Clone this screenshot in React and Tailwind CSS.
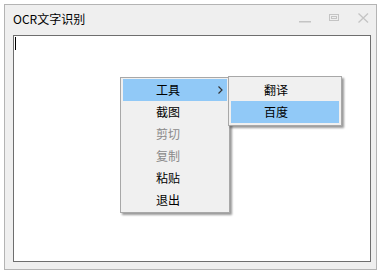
import React from "react";

const font = { fontFamily: '"Noto Sans CJK SC", "Liberation Sans", sans-serif' };

function MenuRow({ label, active, disabled, arrow }) {
  return (
    <div
      className={`relative flex h-[22px] items-center pl-[33px] pb-[1px] text-[12px] leading-none ${
        active ? "bg-[#91c9f7]" : ""
      } ${disabled ? "text-[#8a8a8a]" : "text-black"}`}
    >
      <span>{label}</span>
      {arrow && (
        <svg className="absolute left-[95px] top-[7px]" width="5" height="8" viewBox="0 0 5 8">
          <path d="M0.5 0.5 L4 4 L0.5 7.5" fill="none" stroke="#333" strokeWidth="1.2" />
        </svg>
      )}
    </div>
  );
}

export default function App() {
  return (
    <div className="relative h-[274px] w-[381px] bg-white pl-[4px] pt-[4px]" style={font}>
      <div className="flex h-[266px] w-[373px] flex-col border border-[#b4b4b4] bg-[#efefef]">
        <div className="flex h-[30px] items-start justify-between pl-[8px] pr-[7px] pt-[7px]">
          <span className="text-[12px] leading-[14px] text-black">OCR文字识别</span>
          <div className="flex items-start gap-[18px] pt-[1px]">
            <svg width="12" height="10" viewBox="0 0 12 10">
              <rect x="0" y="8" width="12" height="1.5" fill="#c4c4c4" />
            </svg>
            <svg width="11" height="10" viewBox="0 0 11 10">
              <rect x="0.5" y="1.5" width="9" height="6" fill="none" stroke="#c4c4c4" />
              <rect x="2.5" y="3.5" width="5" height="2" fill="none" stroke="#c4c4c4" />
            </svg>
            <svg width="11" height="10" viewBox="0 0 11 10">
              <path d="M0.5 0.5 L10 9.5 M10 0.5 L0.5 9.5" stroke="#c4c4c4" strokeWidth="1.3" />
            </svg>
          </div>
        </div>
        <div className="ml-[8px] mr-[5px] h-[227px] border border-[#6e6e6e] bg-white pl-[1px] pt-[1px]">
          <div className="h-[13px] w-[1px] bg-black" />
        </div>
      </div>

      <div className="absolute left-[120px] top-[77px] w-[110px] border border-[#a8a8a8] bg-[#f0f0f0] px-[2px] py-[1px] shadow-[2px_2px_2px_rgba(0,0,0,0.4)]">
        <MenuRow label="工具" active arrow />
        <MenuRow label="截图" />
        <MenuRow label="剪切" disabled />
        <MenuRow label="复制" disabled />
        <MenuRow label="粘贴" />
        <MenuRow label="退出" />
      </div>

      <div className="absolute left-[228px] top-[76px] w-[114px] border border-[#a8a8a8] bg-[#f0f0f0] p-[2px] shadow-[2px_2px_2px_rgba(0,0,0,0.4)]">
        <MenuRow label="翻译" />
        <MenuRow label="百度" active />
      </div>
    </div>
  );
}
